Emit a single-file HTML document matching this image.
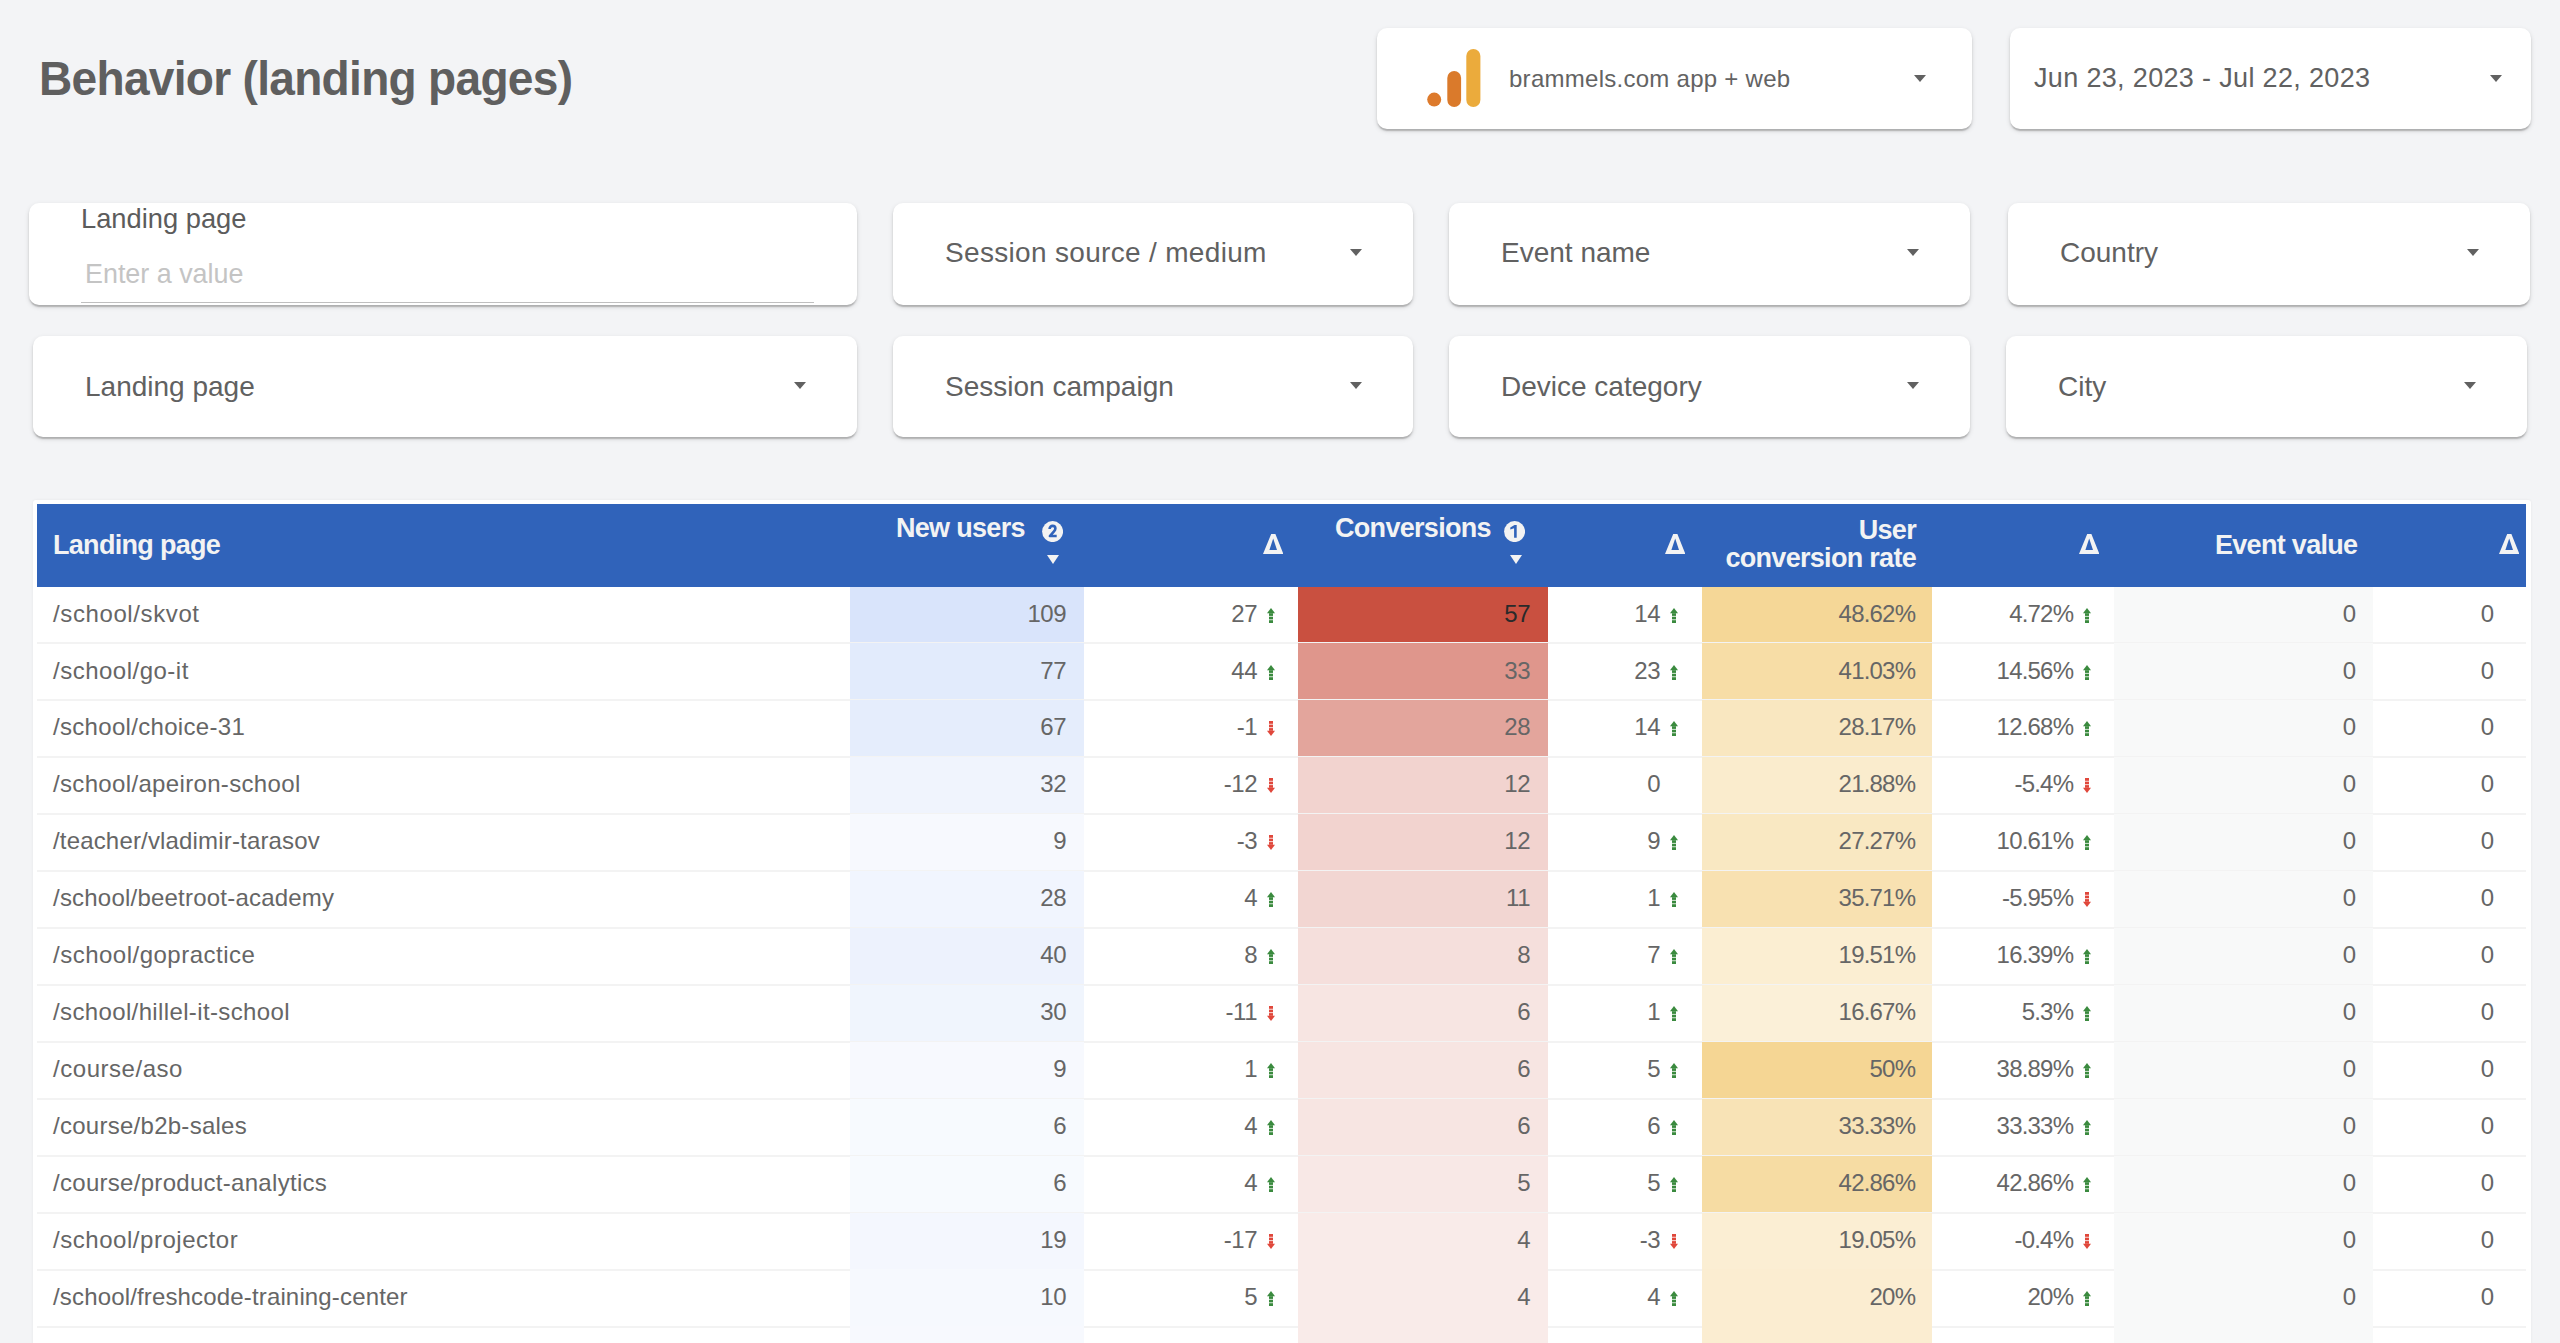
<!DOCTYPE html>
<html><head><meta charset="utf-8"><title>Behavior (landing pages)</title>
<style>
html,body{margin:0;padding:0;}
body{width:2560px;height:1343px;overflow:hidden;background:#f3f4f6;position:relative;font-family:"Liberation Sans",sans-serif;color:#616161;}
.a{position:absolute;white-space:nowrap;}
.card{position:absolute;background:#fff;border-radius:10px;box-shadow:0 2px 5px rgba(0,0,0,0.13),0 2px 2px rgba(0,0,0,0.12),0 3px 1px -1px rgba(0,0,0,0.1);}
.ft{position:absolute;font-size:28px;line-height:32px;color:#616161;white-space:nowrap;}
.hd{position:absolute;color:#f3f3f3;font-weight:bold;font-size:27px;line-height:28px;letter-spacing:-0.7px;white-space:nowrap;}
.cell{position:absolute;font-size:24px;line-height:30px;white-space:nowrap;text-align:right;color:#666666;}
.ar{position:absolute;}
.badge{position:absolute;width:21px;height:21px;border-radius:50%;background:#f3f3f3;color:#3063ba;font-weight:bold;font-size:15px;line-height:21px;text-align:center;}
</style></head><body>

<div class="a" style="left:39px;top:51px;font-size:48.5px;line-height:54px;font-weight:bold;color:#5f5f5f;letter-spacing:-0.75px;transform:scaleX(0.95);transform-origin:0 0;">Behavior (landing pages)</div>
<div class="card" style="left:1377px;top:28px;width:595px;height:101px;"></div>
<svg style="position:absolute;left:1420px;top:45px" width="70" height="70" viewBox="0 0 70 70"><circle cx="14.2" cy="54.6" r="7" fill="#dd7a2c"/><rect x="27.3" y="26" width="13.8" height="36" rx="6.9" fill="#da7a2b"/><rect x="46.3" y="4" width="14.1" height="58" rx="7" fill="#ebab3c"/></svg>
<div class="a" style="left:1509px;top:64px;font-size:24px;line-height:30px;color:#636363;letter-spacing:0.27px">brammels.com app + web</div>
<div style="position:absolute;left:1914px;top:75px;width:0;height:0;border-left:6.5px solid transparent;border-right:6.5px solid transparent;border-top:7px solid #616161"></div>
<div class="card" style="left:2010px;top:28px;width:521px;height:101px;"></div>
<div class="a" style="left:2034px;top:62px;font-size:27px;line-height:32px;color:#616161;letter-spacing:0.34px">Jun 23, 2023 - Jul 22, 2023</div>
<div style="position:absolute;left:2490px;top:75px;width:0;height:0;border-left:6.5px solid transparent;border-right:6.5px solid transparent;border-top:7px solid #616161"></div>
<div class="card" style="left:29px;top:203px;width:828px;height:102px;"></div>
<div class="ft" style="left:81px;top:203px;color:#5c5c5c;font-size:27.3px">Landing page</div>
<div class="ft" style="left:85px;top:258px;color:#c4c4c4;font-size:26.9px">Enter a value</div>
<div class="a" style="left:81px;top:301.5px;width:733px;height:1.2px;background:#bfbfbf"></div>
<div class="card" style="left:893px;top:203px;width:520px;height:102px;"></div>
<div class="ft" style="left:945px;top:237px"><span style='letter-spacing:0.32px'>Session source / medium</span></div>
<div style="position:absolute;left:1350px;top:249px;width:0;height:0;border-left:6.5px solid transparent;border-right:6.5px solid transparent;border-top:7px solid #616161"></div>
<div class="card" style="left:1449px;top:203px;width:521px;height:102px;"></div>
<div class="ft" style="left:1501px;top:237px">Event name</div>
<div style="position:absolute;left:1907px;top:249px;width:0;height:0;border-left:6.5px solid transparent;border-right:6.5px solid transparent;border-top:7px solid #616161"></div>
<div class="card" style="left:2008px;top:203px;width:522px;height:102px;"></div>
<div class="ft" style="left:2060px;top:237px">Country</div>
<div style="position:absolute;left:2467px;top:249px;width:0;height:0;border-left:6.5px solid transparent;border-right:6.5px solid transparent;border-top:7px solid #616161"></div>
<div class="card" style="left:33px;top:336px;width:824px;height:101px;"></div>
<div class="ft" style="left:85px;top:371px">Landing page</div>
<div style="position:absolute;left:794px;top:382px;width:0;height:0;border-left:6.5px solid transparent;border-right:6.5px solid transparent;border-top:7px solid #616161"></div>
<div class="card" style="left:893px;top:336px;width:520px;height:101px;"></div>
<div class="ft" style="left:945px;top:371px">Session campaign</div>
<div style="position:absolute;left:1350px;top:382px;width:0;height:0;border-left:6.5px solid transparent;border-right:6.5px solid transparent;border-top:7px solid #616161"></div>
<div class="card" style="left:1449px;top:336px;width:521px;height:101px;"></div>
<div class="ft" style="left:1501px;top:371px">Device category</div>
<div style="position:absolute;left:1907px;top:382px;width:0;height:0;border-left:6.5px solid transparent;border-right:6.5px solid transparent;border-top:7px solid #616161"></div>
<div class="card" style="left:2006px;top:336px;width:521px;height:101px;"></div>
<div class="ft" style="left:2058px;top:371px">City</div>
<div style="position:absolute;left:2464px;top:382px;width:0;height:0;border-left:6.5px solid transparent;border-right:6.5px solid transparent;border-top:7px solid #616161"></div>
<div class="a" style="left:32.5px;top:500px;width:2498px;height:853px;background:#fff;border-radius:3px;box-shadow:0 0 3px rgba(0,0,0,0.06)"></div>
<div class="a" style="left:37px;top:504px;width:2489px;height:82.5px;background:#3063ba"></div>
<div class="hd" style="left:53px;top:531px">Landing page</div>
<div class="hd" style="left:896px;top:514px">New users</div>
<svg style="position:absolute;left:1041.9px;top:520.9px" width="21.2" height="21.2" viewBox="0 0 21.2 21.2"><circle cx="10.6" cy="10.6" r="10.5" fill="#f3f3f3"/><path d="M7.6 8.0 C7.6 5.8 9.0 4.9 10.6 4.9 C12.4 4.9 13.4 6.0 13.4 7.5 C13.4 8.7 12.8 9.5 11.8 10.6 L7.9 15.0 L14.7 15.0" fill="none" stroke="#3063ba" stroke-width="2.6" stroke-linejoin="round"/></svg>
<div style="position:absolute;left:1046.5px;top:555px;width:0;height:0;border-left:6.25px solid transparent;border-right:6.25px solid transparent;border-top:9.5px solid #f3f3f3"></div>
<div class="hd" style="left:1335px;top:514px">Conversions</div>
<svg style="position:absolute;left:1504.2px;top:521.1px" width="21.2" height="21.2" viewBox="0 0 21.2 21.2"><circle cx="10.6" cy="10.6" r="10.5" fill="#f3f3f3"/><path d="M12.7 3.9 L12.7 16.7 L10.1 16.7 L10.1 7.2 L6.3 8.5 L6.3 6.4 L10.5 3.9 Z" fill="#3063ba"/></svg>
<div style="position:absolute;left:1510px;top:555px;width:0;height:0;border-left:6.25px solid transparent;border-right:6.25px solid transparent;border-top:9.5px solid #f3f3f3"></div>
<div class="hd" style="right:644px;top:516px;text-align:right">User<br>conversion rate</div>
<div class="hd" style="left:2215px;top:531px">Event value</div>
<svg style="position:absolute;left:1263px;top:534px" width="20.4" height="20" viewBox="0 0 20.4 20"><path fill-rule="evenodd" d="M8.2 0 L12.4 0 L20.4 20 L0 20 Z M10.2 4.6 L14.0 16.1 L6.4 16.1 Z" fill="#f3f3f3"/></svg>
<svg style="position:absolute;left:1664.5px;top:534px" width="20.4" height="20" viewBox="0 0 20.4 20"><path fill-rule="evenodd" d="M8.2 0 L12.4 0 L20.4 20 L0 20 Z M10.2 4.6 L14.0 16.1 L6.4 16.1 Z" fill="#f3f3f3"/></svg>
<svg style="position:absolute;left:2079px;top:534px" width="20.4" height="20" viewBox="0 0 20.4 20"><path fill-rule="evenodd" d="M8.2 0 L12.4 0 L20.4 20 L0 20 Z M10.2 4.6 L14.0 16.1 L6.4 16.1 Z" fill="#f3f3f3"/></svg>
<svg style="position:absolute;left:2498.5px;top:534px" width="20.4" height="20" viewBox="0 0 20.4 20"><path fill-rule="evenodd" d="M8.2 0 L12.4 0 L20.4 20 L0 20 Z M10.2 4.6 L14.0 16.1 L6.4 16.1 Z" fill="#f3f3f3"/></svg>
<div class="a" style="left:850px;top:586.5px;width:233.5px;height:56.93px;background:#d9e4fb"></div>
<div class="a" style="left:1298px;top:586.5px;width:249.5px;height:56.93px;background:#c95040"></div>
<div class="a" style="left:1701.5px;top:586.5px;width:230.5px;height:56.93px;background:#f5d797"></div>
<div class="a" style="left:2114px;top:586.5px;width:258.5px;height:56.93px;background:#f8f9f9"></div>
<div class="a" style="left:37px;top:642.43px;width:2489px;height:2px;background:#f3f3f3"></div>
<div class="cell" style="left:53px;top:598.5999999999999px;text-align:left;letter-spacing:0.608px">/school/skvot</div>
<div class="cell" style="right:1494.0px;top:598.5999999999999px;letter-spacing:-0.5px">109</div>
<div class="cell" style="right:1303.0px;top:598.5999999999999px;letter-spacing:-0.5px">27</div>
<div class="cell" style="right:1030.0px;top:598.5999999999999px;letter-spacing:-0.5px;color:#2a2a2a">57</div>
<div class="cell" style="right:900.0px;top:598.5999999999999px;letter-spacing:-0.5px">14</div>
<div class="cell" style="right:644.8px;top:598.5999999999999px;letter-spacing:-0.8px">48.62%</div>
<div class="cell" style="right:486.8px;top:598.5999999999999px;letter-spacing:-0.8px">4.72%</div>
<div class="cell" style="right:204px;top:598.5999999999999px;letter-spacing:0px">0</div>
<div class="cell" style="right:66px;top:598.5999999999999px;letter-spacing:0px">0</div>
<div style="position:absolute;left:1266.7px;top:607.5999999999999px"><svg class="ar" width="8" height="15" viewBox="0 0 8 15"><path d="M4 0 L8 5.2 L0 5.2 Z" fill="#3a8a3e"/><rect x="2" y="5.2" width="4" height="2.7" fill="#3a8a3e"/><rect x="2" y="8.7" width="4" height="2.7" fill="#3a8a3e"/><rect x="2" y="12.2" width="4" height="2.8" fill="#3a8a3e"/></svg></div>
<div style="position:absolute;left:1669.5px;top:607.5999999999999px"><svg class="ar" width="8" height="15" viewBox="0 0 8 15"><path d="M4 0 L8 5.2 L0 5.2 Z" fill="#3a8a3e"/><rect x="2" y="5.2" width="4" height="2.7" fill="#3a8a3e"/><rect x="2" y="8.7" width="4" height="2.7" fill="#3a8a3e"/><rect x="2" y="12.2" width="4" height="2.8" fill="#3a8a3e"/></svg></div>
<div style="position:absolute;left:2083px;top:607.5999999999999px"><svg class="ar" width="8" height="15" viewBox="0 0 8 15"><path d="M4 0 L8 5.2 L0 5.2 Z" fill="#3a8a3e"/><rect x="2" y="5.2" width="4" height="2.7" fill="#3a8a3e"/><rect x="2" y="8.7" width="4" height="2.7" fill="#3a8a3e"/><rect x="2" y="12.2" width="4" height="2.8" fill="#3a8a3e"/></svg></div>
<div class="a" style="left:850px;top:643.2299999999999px;width:233.5px;height:56.93px;background:#e2ebfc"></div>
<div class="a" style="left:1298px;top:643.2299999999999px;width:249.5px;height:56.93px;background:#df968c"></div>
<div class="a" style="left:1701.5px;top:643.2299999999999px;width:230.5px;height:56.93px;background:#f7dda6"></div>
<div class="a" style="left:2114px;top:643.2299999999999px;width:258.5px;height:56.93px;background:#f8f9f9"></div>
<div class="a" style="left:37px;top:699.3599999999999px;width:2489px;height:2px;background:#f3f3f3"></div>
<div class="cell" style="left:53px;top:655.5299999999999px;text-align:left;letter-spacing:0.492px">/school/go-it</div>
<div class="cell" style="right:1494.0px;top:655.5299999999999px;letter-spacing:-0.5px">77</div>
<div class="cell" style="right:1303.0px;top:655.5299999999999px;letter-spacing:-0.5px">44</div>
<div class="cell" style="right:1030.0px;top:655.5299999999999px;letter-spacing:-0.5px">33</div>
<div class="cell" style="right:900.0px;top:655.5299999999999px;letter-spacing:-0.5px">23</div>
<div class="cell" style="right:644.8px;top:655.5299999999999px;letter-spacing:-0.8px">41.03%</div>
<div class="cell" style="right:486.8px;top:655.5299999999999px;letter-spacing:-0.8px">14.56%</div>
<div class="cell" style="right:204px;top:655.5299999999999px;letter-spacing:0px">0</div>
<div class="cell" style="right:66px;top:655.5299999999999px;letter-spacing:0px">0</div>
<div style="position:absolute;left:1266.7px;top:664.5299999999999px"><svg class="ar" width="8" height="15" viewBox="0 0 8 15"><path d="M4 0 L8 5.2 L0 5.2 Z" fill="#3a8a3e"/><rect x="2" y="5.2" width="4" height="2.7" fill="#3a8a3e"/><rect x="2" y="8.7" width="4" height="2.7" fill="#3a8a3e"/><rect x="2" y="12.2" width="4" height="2.8" fill="#3a8a3e"/></svg></div>
<div style="position:absolute;left:1669.5px;top:664.5299999999999px"><svg class="ar" width="8" height="15" viewBox="0 0 8 15"><path d="M4 0 L8 5.2 L0 5.2 Z" fill="#3a8a3e"/><rect x="2" y="5.2" width="4" height="2.7" fill="#3a8a3e"/><rect x="2" y="8.7" width="4" height="2.7" fill="#3a8a3e"/><rect x="2" y="12.2" width="4" height="2.8" fill="#3a8a3e"/></svg></div>
<div style="position:absolute;left:2083px;top:664.5299999999999px"><svg class="ar" width="8" height="15" viewBox="0 0 8 15"><path d="M4 0 L8 5.2 L0 5.2 Z" fill="#3a8a3e"/><rect x="2" y="5.2" width="4" height="2.7" fill="#3a8a3e"/><rect x="2" y="8.7" width="4" height="2.7" fill="#3a8a3e"/><rect x="2" y="12.2" width="4" height="2.8" fill="#3a8a3e"/></svg></div>
<div class="a" style="left:850px;top:700.16px;width:233.5px;height:56.93px;background:#e5edfc"></div>
<div class="a" style="left:1298px;top:700.16px;width:249.5px;height:56.93px;background:#e3a59c"></div>
<div class="a" style="left:1701.5px;top:700.16px;width:230.5px;height:56.93px;background:#f9e7c0"></div>
<div class="a" style="left:2114px;top:700.16px;width:258.5px;height:56.93px;background:#f8f9f9"></div>
<div class="a" style="left:37px;top:756.29px;width:2489px;height:2px;background:#f3f3f3"></div>
<div class="cell" style="left:53px;top:712.4599999999999px;text-align:left;letter-spacing:0.312px">/school/choice-31</div>
<div class="cell" style="right:1494.0px;top:712.4599999999999px;letter-spacing:-0.5px">67</div>
<div class="cell" style="right:1303.0px;top:712.4599999999999px;letter-spacing:-0.5px">-1</div>
<div class="cell" style="right:1030.0px;top:712.4599999999999px;letter-spacing:-0.5px">28</div>
<div class="cell" style="right:900.0px;top:712.4599999999999px;letter-spacing:-0.5px">14</div>
<div class="cell" style="right:644.8px;top:712.4599999999999px;letter-spacing:-0.8px">28.17%</div>
<div class="cell" style="right:486.8px;top:712.4599999999999px;letter-spacing:-0.8px">12.68%</div>
<div class="cell" style="right:204px;top:712.4599999999999px;letter-spacing:0px">0</div>
<div class="cell" style="right:66px;top:712.4599999999999px;letter-spacing:0px">0</div>
<div style="position:absolute;left:1266.7px;top:721.4599999999999px"><svg class="ar" width="8" height="15" viewBox="0 0 8 15"><path d="M4 15 L8 9.8 L0 9.8 Z" fill="#e0473b"/><rect x="2" y="0" width="4" height="2.8" fill="#e0473b"/><rect x="2" y="3.6" width="4" height="2.7" fill="#e0473b"/><rect x="2" y="7.1" width="4" height="2.7" fill="#e0473b"/></svg></div>
<div style="position:absolute;left:1669.5px;top:721.4599999999999px"><svg class="ar" width="8" height="15" viewBox="0 0 8 15"><path d="M4 0 L8 5.2 L0 5.2 Z" fill="#3a8a3e"/><rect x="2" y="5.2" width="4" height="2.7" fill="#3a8a3e"/><rect x="2" y="8.7" width="4" height="2.7" fill="#3a8a3e"/><rect x="2" y="12.2" width="4" height="2.8" fill="#3a8a3e"/></svg></div>
<div style="position:absolute;left:2083px;top:721.4599999999999px"><svg class="ar" width="8" height="15" viewBox="0 0 8 15"><path d="M4 0 L8 5.2 L0 5.2 Z" fill="#3a8a3e"/><rect x="2" y="5.2" width="4" height="2.7" fill="#3a8a3e"/><rect x="2" y="8.7" width="4" height="2.7" fill="#3a8a3e"/><rect x="2" y="12.2" width="4" height="2.8" fill="#3a8a3e"/></svg></div>
<div class="a" style="left:850px;top:757.0899999999999px;width:233.5px;height:56.93px;background:#f0f4fd"></div>
<div class="a" style="left:1298px;top:757.0899999999999px;width:249.5px;height:56.93px;background:#f2d3cf"></div>
<div class="a" style="left:1701.5px;top:757.0899999999999px;width:230.5px;height:56.93px;background:#faeccd"></div>
<div class="a" style="left:2114px;top:757.0899999999999px;width:258.5px;height:56.93px;background:#f8f9f9"></div>
<div class="a" style="left:37px;top:813.2199999999999px;width:2489px;height:2px;background:#f3f3f3"></div>
<div class="cell" style="left:53px;top:769.3899999999999px;text-align:left;letter-spacing:0.338px">/school/apeiron-school</div>
<div class="cell" style="right:1494.0px;top:769.3899999999999px;letter-spacing:-0.5px">32</div>
<div class="cell" style="right:1303.0px;top:769.3899999999999px;letter-spacing:-0.5px">-12</div>
<div class="cell" style="right:1030.0px;top:769.3899999999999px;letter-spacing:-0.5px">12</div>
<div class="cell" style="right:899.5px;top:769.3899999999999px;letter-spacing:0px">0</div>
<div class="cell" style="right:644.8px;top:769.3899999999999px;letter-spacing:-0.8px">21.88%</div>
<div class="cell" style="right:486.8px;top:769.3899999999999px;letter-spacing:-0.8px">-5.4%</div>
<div class="cell" style="right:204px;top:769.3899999999999px;letter-spacing:0px">0</div>
<div class="cell" style="right:66px;top:769.3899999999999px;letter-spacing:0px">0</div>
<div style="position:absolute;left:1266.7px;top:778.3899999999999px"><svg class="ar" width="8" height="15" viewBox="0 0 8 15"><path d="M4 15 L8 9.8 L0 9.8 Z" fill="#e0473b"/><rect x="2" y="0" width="4" height="2.8" fill="#e0473b"/><rect x="2" y="3.6" width="4" height="2.7" fill="#e0473b"/><rect x="2" y="7.1" width="4" height="2.7" fill="#e0473b"/></svg></div>
<div style="position:absolute;left:2083px;top:778.3899999999999px"><svg class="ar" width="8" height="15" viewBox="0 0 8 15"><path d="M4 15 L8 9.8 L0 9.8 Z" fill="#e0473b"/><rect x="2" y="0" width="4" height="2.8" fill="#e0473b"/><rect x="2" y="3.6" width="4" height="2.7" fill="#e0473b"/><rect x="2" y="7.1" width="4" height="2.7" fill="#e0473b"/></svg></div>
<div class="a" style="left:850px;top:814.02px;width:233.5px;height:56.93px;background:#f7f9fe"></div>
<div class="a" style="left:1298px;top:814.02px;width:249.5px;height:56.93px;background:#f2d3cf"></div>
<div class="a" style="left:1701.5px;top:814.02px;width:230.5px;height:56.93px;background:#f9e8c2"></div>
<div class="a" style="left:2114px;top:814.02px;width:258.5px;height:56.93px;background:#f8f9f9"></div>
<div class="a" style="left:37px;top:870.15px;width:2489px;height:2px;background:#f3f3f3"></div>
<div class="cell" style="left:53px;top:826.3199999999999px;text-align:left;letter-spacing:0.167px">/teacher/vladimir-tarasov</div>
<div class="cell" style="right:1493.5px;top:826.3199999999999px;letter-spacing:0px">9</div>
<div class="cell" style="right:1303.0px;top:826.3199999999999px;letter-spacing:-0.5px">-3</div>
<div class="cell" style="right:1030.0px;top:826.3199999999999px;letter-spacing:-0.5px">12</div>
<div class="cell" style="right:899.5px;top:826.3199999999999px;letter-spacing:0px">9</div>
<div class="cell" style="right:644.8px;top:826.3199999999999px;letter-spacing:-0.8px">27.27%</div>
<div class="cell" style="right:486.8px;top:826.3199999999999px;letter-spacing:-0.8px">10.61%</div>
<div class="cell" style="right:204px;top:826.3199999999999px;letter-spacing:0px">0</div>
<div class="cell" style="right:66px;top:826.3199999999999px;letter-spacing:0px">0</div>
<div style="position:absolute;left:1266.7px;top:835.3199999999999px"><svg class="ar" width="8" height="15" viewBox="0 0 8 15"><path d="M4 15 L8 9.8 L0 9.8 Z" fill="#e0473b"/><rect x="2" y="0" width="4" height="2.8" fill="#e0473b"/><rect x="2" y="3.6" width="4" height="2.7" fill="#e0473b"/><rect x="2" y="7.1" width="4" height="2.7" fill="#e0473b"/></svg></div>
<div style="position:absolute;left:1669.5px;top:835.3199999999999px"><svg class="ar" width="8" height="15" viewBox="0 0 8 15"><path d="M4 0 L8 5.2 L0 5.2 Z" fill="#3a8a3e"/><rect x="2" y="5.2" width="4" height="2.7" fill="#3a8a3e"/><rect x="2" y="8.7" width="4" height="2.7" fill="#3a8a3e"/><rect x="2" y="12.2" width="4" height="2.8" fill="#3a8a3e"/></svg></div>
<div style="position:absolute;left:2083px;top:835.3199999999999px"><svg class="ar" width="8" height="15" viewBox="0 0 8 15"><path d="M4 0 L8 5.2 L0 5.2 Z" fill="#3a8a3e"/><rect x="2" y="5.2" width="4" height="2.7" fill="#3a8a3e"/><rect x="2" y="8.7" width="4" height="2.7" fill="#3a8a3e"/><rect x="2" y="12.2" width="4" height="2.8" fill="#3a8a3e"/></svg></div>
<div class="a" style="left:850px;top:870.9499999999999px;width:233.5px;height:56.93px;background:#f1f5fe"></div>
<div class="a" style="left:1298px;top:870.9499999999999px;width:249.5px;height:56.93px;background:#f2d6d2"></div>
<div class="a" style="left:1701.5px;top:870.9499999999999px;width:230.5px;height:56.93px;background:#f8e1b1"></div>
<div class="a" style="left:2114px;top:870.9499999999999px;width:258.5px;height:56.93px;background:#f8f9f9"></div>
<div class="a" style="left:37px;top:927.0799999999999px;width:2489px;height:2px;background:#f3f3f3"></div>
<div class="cell" style="left:53px;top:883.2499999999999px;text-align:left;letter-spacing:0.213px">/school/beetroot-academy</div>
<div class="cell" style="right:1494.0px;top:883.2499999999999px;letter-spacing:-0.5px">28</div>
<div class="cell" style="right:1302.5px;top:883.2499999999999px;letter-spacing:0px">4</div>
<div class="cell" style="right:1030.0px;top:883.2499999999999px;letter-spacing:-0.5px">11</div>
<div class="cell" style="right:899.5px;top:883.2499999999999px;letter-spacing:0px">1</div>
<div class="cell" style="right:644.8px;top:883.2499999999999px;letter-spacing:-0.8px">35.71%</div>
<div class="cell" style="right:486.8px;top:883.2499999999999px;letter-spacing:-0.8px">-5.95%</div>
<div class="cell" style="right:204px;top:883.2499999999999px;letter-spacing:0px">0</div>
<div class="cell" style="right:66px;top:883.2499999999999px;letter-spacing:0px">0</div>
<div style="position:absolute;left:1266.7px;top:892.2499999999999px"><svg class="ar" width="8" height="15" viewBox="0 0 8 15"><path d="M4 0 L8 5.2 L0 5.2 Z" fill="#3a8a3e"/><rect x="2" y="5.2" width="4" height="2.7" fill="#3a8a3e"/><rect x="2" y="8.7" width="4" height="2.7" fill="#3a8a3e"/><rect x="2" y="12.2" width="4" height="2.8" fill="#3a8a3e"/></svg></div>
<div style="position:absolute;left:1669.5px;top:892.2499999999999px"><svg class="ar" width="8" height="15" viewBox="0 0 8 15"><path d="M4 0 L8 5.2 L0 5.2 Z" fill="#3a8a3e"/><rect x="2" y="5.2" width="4" height="2.7" fill="#3a8a3e"/><rect x="2" y="8.7" width="4" height="2.7" fill="#3a8a3e"/><rect x="2" y="12.2" width="4" height="2.8" fill="#3a8a3e"/></svg></div>
<div style="position:absolute;left:2083px;top:892.2499999999999px"><svg class="ar" width="8" height="15" viewBox="0 0 8 15"><path d="M4 15 L8 9.8 L0 9.8 Z" fill="#e0473b"/><rect x="2" y="0" width="4" height="2.8" fill="#e0473b"/><rect x="2" y="3.6" width="4" height="2.7" fill="#e0473b"/><rect x="2" y="7.1" width="4" height="2.7" fill="#e0473b"/></svg></div>
<div class="a" style="left:850px;top:927.8799999999999px;width:233.5px;height:56.93px;background:#edf2fd"></div>
<div class="a" style="left:1298px;top:927.8799999999999px;width:249.5px;height:56.93px;background:#f5dfdc"></div>
<div class="a" style="left:1701.5px;top:927.8799999999999px;width:230.5px;height:56.93px;background:#fbeed2"></div>
<div class="a" style="left:2114px;top:927.8799999999999px;width:258.5px;height:56.93px;background:#f8f9f9"></div>
<div class="a" style="left:37px;top:984.0099999999999px;width:2489px;height:2px;background:#f3f3f3"></div>
<div class="cell" style="left:53px;top:940.1799999999998px;text-align:left;letter-spacing:0.494px">/school/gopractice</div>
<div class="cell" style="right:1494.0px;top:940.1799999999998px;letter-spacing:-0.5px">40</div>
<div class="cell" style="right:1302.5px;top:940.1799999999998px;letter-spacing:0px">8</div>
<div class="cell" style="right:1029.5px;top:940.1799999999998px;letter-spacing:0px">8</div>
<div class="cell" style="right:899.5px;top:940.1799999999998px;letter-spacing:0px">7</div>
<div class="cell" style="right:644.8px;top:940.1799999999998px;letter-spacing:-0.8px">19.51%</div>
<div class="cell" style="right:486.8px;top:940.1799999999998px;letter-spacing:-0.8px">16.39%</div>
<div class="cell" style="right:204px;top:940.1799999999998px;letter-spacing:0px">0</div>
<div class="cell" style="right:66px;top:940.1799999999998px;letter-spacing:0px">0</div>
<div style="position:absolute;left:1266.7px;top:949.1799999999998px"><svg class="ar" width="8" height="15" viewBox="0 0 8 15"><path d="M4 0 L8 5.2 L0 5.2 Z" fill="#3a8a3e"/><rect x="2" y="5.2" width="4" height="2.7" fill="#3a8a3e"/><rect x="2" y="8.7" width="4" height="2.7" fill="#3a8a3e"/><rect x="2" y="12.2" width="4" height="2.8" fill="#3a8a3e"/></svg></div>
<div style="position:absolute;left:1669.5px;top:949.1799999999998px"><svg class="ar" width="8" height="15" viewBox="0 0 8 15"><path d="M4 0 L8 5.2 L0 5.2 Z" fill="#3a8a3e"/><rect x="2" y="5.2" width="4" height="2.7" fill="#3a8a3e"/><rect x="2" y="8.7" width="4" height="2.7" fill="#3a8a3e"/><rect x="2" y="12.2" width="4" height="2.8" fill="#3a8a3e"/></svg></div>
<div style="position:absolute;left:2083px;top:949.1799999999998px"><svg class="ar" width="8" height="15" viewBox="0 0 8 15"><path d="M4 0 L8 5.2 L0 5.2 Z" fill="#3a8a3e"/><rect x="2" y="5.2" width="4" height="2.7" fill="#3a8a3e"/><rect x="2" y="8.7" width="4" height="2.7" fill="#3a8a3e"/><rect x="2" y="12.2" width="4" height="2.8" fill="#3a8a3e"/></svg></div>
<div class="a" style="left:850px;top:984.81px;width:233.5px;height:56.93px;background:#f0f5fd"></div>
<div class="a" style="left:1298px;top:984.81px;width:249.5px;height:56.93px;background:#f7e5e2"></div>
<div class="a" style="left:1701.5px;top:984.81px;width:230.5px;height:56.93px;background:#fbf0d8"></div>
<div class="a" style="left:2114px;top:984.81px;width:258.5px;height:56.93px;background:#f8f9f9"></div>
<div class="a" style="left:37px;top:1040.94px;width:2489px;height:2px;background:#f3f3f3"></div>
<div class="cell" style="left:53px;top:997.1099999999999px;text-align:left;letter-spacing:0.365px">/school/hillel-it-school</div>
<div class="cell" style="right:1494.0px;top:997.1099999999999px;letter-spacing:-0.5px">30</div>
<div class="cell" style="right:1303.0px;top:997.1099999999999px;letter-spacing:-0.5px">-11</div>
<div class="cell" style="right:1029.5px;top:997.1099999999999px;letter-spacing:0px">6</div>
<div class="cell" style="right:899.5px;top:997.1099999999999px;letter-spacing:0px">1</div>
<div class="cell" style="right:644.8px;top:997.1099999999999px;letter-spacing:-0.8px">16.67%</div>
<div class="cell" style="right:486.8px;top:997.1099999999999px;letter-spacing:-0.8px">5.3%</div>
<div class="cell" style="right:204px;top:997.1099999999999px;letter-spacing:0px">0</div>
<div class="cell" style="right:66px;top:997.1099999999999px;letter-spacing:0px">0</div>
<div style="position:absolute;left:1266.7px;top:1006.1099999999999px"><svg class="ar" width="8" height="15" viewBox="0 0 8 15"><path d="M4 15 L8 9.8 L0 9.8 Z" fill="#e0473b"/><rect x="2" y="0" width="4" height="2.8" fill="#e0473b"/><rect x="2" y="3.6" width="4" height="2.7" fill="#e0473b"/><rect x="2" y="7.1" width="4" height="2.7" fill="#e0473b"/></svg></div>
<div style="position:absolute;left:1669.5px;top:1006.1099999999999px"><svg class="ar" width="8" height="15" viewBox="0 0 8 15"><path d="M4 0 L8 5.2 L0 5.2 Z" fill="#3a8a3e"/><rect x="2" y="5.2" width="4" height="2.7" fill="#3a8a3e"/><rect x="2" y="8.7" width="4" height="2.7" fill="#3a8a3e"/><rect x="2" y="12.2" width="4" height="2.8" fill="#3a8a3e"/></svg></div>
<div style="position:absolute;left:2083px;top:1006.1099999999999px"><svg class="ar" width="8" height="15" viewBox="0 0 8 15"><path d="M4 0 L8 5.2 L0 5.2 Z" fill="#3a8a3e"/><rect x="2" y="5.2" width="4" height="2.7" fill="#3a8a3e"/><rect x="2" y="8.7" width="4" height="2.7" fill="#3a8a3e"/><rect x="2" y="12.2" width="4" height="2.8" fill="#3a8a3e"/></svg></div>
<div class="a" style="left:850px;top:1041.74px;width:233.5px;height:56.93px;background:#f7f9fe"></div>
<div class="a" style="left:1298px;top:1041.74px;width:249.5px;height:56.93px;background:#f7e5e2"></div>
<div class="a" style="left:1701.5px;top:1041.74px;width:230.5px;height:56.93px;background:#f5d694"></div>
<div class="a" style="left:2114px;top:1041.74px;width:258.5px;height:56.93px;background:#f8f9f9"></div>
<div class="a" style="left:37px;top:1097.8700000000001px;width:2489px;height:2px;background:#f3f3f3"></div>
<div class="cell" style="left:53px;top:1054.04px;text-align:left;letter-spacing:0.540px">/course/aso</div>
<div class="cell" style="right:1493.5px;top:1054.04px;letter-spacing:0px">9</div>
<div class="cell" style="right:1302.5px;top:1054.04px;letter-spacing:0px">1</div>
<div class="cell" style="right:1029.5px;top:1054.04px;letter-spacing:0px">6</div>
<div class="cell" style="right:899.5px;top:1054.04px;letter-spacing:0px">5</div>
<div class="cell" style="right:644.8px;top:1054.04px;letter-spacing:-0.8px">50%</div>
<div class="cell" style="right:486.8px;top:1054.04px;letter-spacing:-0.8px">38.89%</div>
<div class="cell" style="right:204px;top:1054.04px;letter-spacing:0px">0</div>
<div class="cell" style="right:66px;top:1054.04px;letter-spacing:0px">0</div>
<div style="position:absolute;left:1266.7px;top:1063.04px"><svg class="ar" width="8" height="15" viewBox="0 0 8 15"><path d="M4 0 L8 5.2 L0 5.2 Z" fill="#3a8a3e"/><rect x="2" y="5.2" width="4" height="2.7" fill="#3a8a3e"/><rect x="2" y="8.7" width="4" height="2.7" fill="#3a8a3e"/><rect x="2" y="12.2" width="4" height="2.8" fill="#3a8a3e"/></svg></div>
<div style="position:absolute;left:1669.5px;top:1063.04px"><svg class="ar" width="8" height="15" viewBox="0 0 8 15"><path d="M4 0 L8 5.2 L0 5.2 Z" fill="#3a8a3e"/><rect x="2" y="5.2" width="4" height="2.7" fill="#3a8a3e"/><rect x="2" y="8.7" width="4" height="2.7" fill="#3a8a3e"/><rect x="2" y="12.2" width="4" height="2.8" fill="#3a8a3e"/></svg></div>
<div style="position:absolute;left:2083px;top:1063.04px"><svg class="ar" width="8" height="15" viewBox="0 0 8 15"><path d="M4 0 L8 5.2 L0 5.2 Z" fill="#3a8a3e"/><rect x="2" y="5.2" width="4" height="2.7" fill="#3a8a3e"/><rect x="2" y="8.7" width="4" height="2.7" fill="#3a8a3e"/><rect x="2" y="12.2" width="4" height="2.8" fill="#3a8a3e"/></svg></div>
<div class="a" style="left:850px;top:1098.67px;width:233.5px;height:56.93px;background:#f7fafe"></div>
<div class="a" style="left:1298px;top:1098.67px;width:249.5px;height:56.93px;background:#f7e5e2"></div>
<div class="a" style="left:1701.5px;top:1098.67px;width:230.5px;height:56.93px;background:#f8e3b6"></div>
<div class="a" style="left:2114px;top:1098.67px;width:258.5px;height:56.93px;background:#f8f9f9"></div>
<div class="a" style="left:37px;top:1154.8000000000002px;width:2489px;height:2px;background:#f3f3f3"></div>
<div class="cell" style="left:53px;top:1110.97px;text-align:left;letter-spacing:0.269px">/course/b2b-sales</div>
<div class="cell" style="right:1493.5px;top:1110.97px;letter-spacing:0px">6</div>
<div class="cell" style="right:1302.5px;top:1110.97px;letter-spacing:0px">4</div>
<div class="cell" style="right:1029.5px;top:1110.97px;letter-spacing:0px">6</div>
<div class="cell" style="right:899.5px;top:1110.97px;letter-spacing:0px">6</div>
<div class="cell" style="right:644.8px;top:1110.97px;letter-spacing:-0.8px">33.33%</div>
<div class="cell" style="right:486.8px;top:1110.97px;letter-spacing:-0.8px">33.33%</div>
<div class="cell" style="right:204px;top:1110.97px;letter-spacing:0px">0</div>
<div class="cell" style="right:66px;top:1110.97px;letter-spacing:0px">0</div>
<div style="position:absolute;left:1266.7px;top:1119.97px"><svg class="ar" width="8" height="15" viewBox="0 0 8 15"><path d="M4 0 L8 5.2 L0 5.2 Z" fill="#3a8a3e"/><rect x="2" y="5.2" width="4" height="2.7" fill="#3a8a3e"/><rect x="2" y="8.7" width="4" height="2.7" fill="#3a8a3e"/><rect x="2" y="12.2" width="4" height="2.8" fill="#3a8a3e"/></svg></div>
<div style="position:absolute;left:1669.5px;top:1119.97px"><svg class="ar" width="8" height="15" viewBox="0 0 8 15"><path d="M4 0 L8 5.2 L0 5.2 Z" fill="#3a8a3e"/><rect x="2" y="5.2" width="4" height="2.7" fill="#3a8a3e"/><rect x="2" y="8.7" width="4" height="2.7" fill="#3a8a3e"/><rect x="2" y="12.2" width="4" height="2.8" fill="#3a8a3e"/></svg></div>
<div style="position:absolute;left:2083px;top:1119.97px"><svg class="ar" width="8" height="15" viewBox="0 0 8 15"><path d="M4 0 L8 5.2 L0 5.2 Z" fill="#3a8a3e"/><rect x="2" y="5.2" width="4" height="2.7" fill="#3a8a3e"/><rect x="2" y="8.7" width="4" height="2.7" fill="#3a8a3e"/><rect x="2" y="12.2" width="4" height="2.8" fill="#3a8a3e"/></svg></div>
<div class="a" style="left:850px;top:1155.6px;width:233.5px;height:56.93px;background:#f7fafe"></div>
<div class="a" style="left:1298px;top:1155.6px;width:249.5px;height:56.93px;background:#f8e8e6"></div>
<div class="a" style="left:1701.5px;top:1155.6px;width:230.5px;height:56.93px;background:#f6dca3"></div>
<div class="a" style="left:2114px;top:1155.6px;width:258.5px;height:56.93px;background:#f8f9f9"></div>
<div class="a" style="left:37px;top:1211.73px;width:2489px;height:2px;background:#f3f3f3"></div>
<div class="cell" style="left:53px;top:1167.8999999999999px;text-align:left;letter-spacing:0.292px">/course/product-analytics</div>
<div class="cell" style="right:1493.5px;top:1167.8999999999999px;letter-spacing:0px">6</div>
<div class="cell" style="right:1302.5px;top:1167.8999999999999px;letter-spacing:0px">4</div>
<div class="cell" style="right:1029.5px;top:1167.8999999999999px;letter-spacing:0px">5</div>
<div class="cell" style="right:899.5px;top:1167.8999999999999px;letter-spacing:0px">5</div>
<div class="cell" style="right:644.8px;top:1167.8999999999999px;letter-spacing:-0.8px">42.86%</div>
<div class="cell" style="right:486.8px;top:1167.8999999999999px;letter-spacing:-0.8px">42.86%</div>
<div class="cell" style="right:204px;top:1167.8999999999999px;letter-spacing:0px">0</div>
<div class="cell" style="right:66px;top:1167.8999999999999px;letter-spacing:0px">0</div>
<div style="position:absolute;left:1266.7px;top:1176.8999999999999px"><svg class="ar" width="8" height="15" viewBox="0 0 8 15"><path d="M4 0 L8 5.2 L0 5.2 Z" fill="#3a8a3e"/><rect x="2" y="5.2" width="4" height="2.7" fill="#3a8a3e"/><rect x="2" y="8.7" width="4" height="2.7" fill="#3a8a3e"/><rect x="2" y="12.2" width="4" height="2.8" fill="#3a8a3e"/></svg></div>
<div style="position:absolute;left:1669.5px;top:1176.8999999999999px"><svg class="ar" width="8" height="15" viewBox="0 0 8 15"><path d="M4 0 L8 5.2 L0 5.2 Z" fill="#3a8a3e"/><rect x="2" y="5.2" width="4" height="2.7" fill="#3a8a3e"/><rect x="2" y="8.7" width="4" height="2.7" fill="#3a8a3e"/><rect x="2" y="12.2" width="4" height="2.8" fill="#3a8a3e"/></svg></div>
<div style="position:absolute;left:2083px;top:1176.8999999999999px"><svg class="ar" width="8" height="15" viewBox="0 0 8 15"><path d="M4 0 L8 5.2 L0 5.2 Z" fill="#3a8a3e"/><rect x="2" y="5.2" width="4" height="2.7" fill="#3a8a3e"/><rect x="2" y="8.7" width="4" height="2.7" fill="#3a8a3e"/><rect x="2" y="12.2" width="4" height="2.8" fill="#3a8a3e"/></svg></div>
<div class="a" style="left:850px;top:1212.53px;width:233.5px;height:56.93px;background:#f4f7fe"></div>
<div class="a" style="left:1298px;top:1212.53px;width:249.5px;height:56.93px;background:#f9ebe9"></div>
<div class="a" style="left:1701.5px;top:1212.53px;width:230.5px;height:56.93px;background:#fbeed3"></div>
<div class="a" style="left:2114px;top:1212.53px;width:258.5px;height:56.93px;background:#f8f9f9"></div>
<div class="a" style="left:37px;top:1268.66px;width:2489px;height:2px;background:#f3f3f3"></div>
<div class="cell" style="left:53px;top:1224.83px;text-align:left;letter-spacing:0.537px">/school/projector</div>
<div class="cell" style="right:1494.0px;top:1224.83px;letter-spacing:-0.5px">19</div>
<div class="cell" style="right:1303.0px;top:1224.83px;letter-spacing:-0.5px">-17</div>
<div class="cell" style="right:1029.5px;top:1224.83px;letter-spacing:0px">4</div>
<div class="cell" style="right:900.0px;top:1224.83px;letter-spacing:-0.5px">-3</div>
<div class="cell" style="right:644.8px;top:1224.83px;letter-spacing:-0.8px">19.05%</div>
<div class="cell" style="right:486.8px;top:1224.83px;letter-spacing:-0.8px">-0.4%</div>
<div class="cell" style="right:204px;top:1224.83px;letter-spacing:0px">0</div>
<div class="cell" style="right:66px;top:1224.83px;letter-spacing:0px">0</div>
<div style="position:absolute;left:1266.7px;top:1233.83px"><svg class="ar" width="8" height="15" viewBox="0 0 8 15"><path d="M4 15 L8 9.8 L0 9.8 Z" fill="#e0473b"/><rect x="2" y="0" width="4" height="2.8" fill="#e0473b"/><rect x="2" y="3.6" width="4" height="2.7" fill="#e0473b"/><rect x="2" y="7.1" width="4" height="2.7" fill="#e0473b"/></svg></div>
<div style="position:absolute;left:1669.5px;top:1233.83px"><svg class="ar" width="8" height="15" viewBox="0 0 8 15"><path d="M4 15 L8 9.8 L0 9.8 Z" fill="#e0473b"/><rect x="2" y="0" width="4" height="2.8" fill="#e0473b"/><rect x="2" y="3.6" width="4" height="2.7" fill="#e0473b"/><rect x="2" y="7.1" width="4" height="2.7" fill="#e0473b"/></svg></div>
<div style="position:absolute;left:2083px;top:1233.83px"><svg class="ar" width="8" height="15" viewBox="0 0 8 15"><path d="M4 15 L8 9.8 L0 9.8 Z" fill="#e0473b"/><rect x="2" y="0" width="4" height="2.8" fill="#e0473b"/><rect x="2" y="3.6" width="4" height="2.7" fill="#e0473b"/><rect x="2" y="7.1" width="4" height="2.7" fill="#e0473b"/></svg></div>
<div class="a" style="left:850px;top:1269.46px;width:233.5px;height:56.93px;background:#f6f9fe"></div>
<div class="a" style="left:1298px;top:1269.46px;width:249.5px;height:56.93px;background:#f9ebe9"></div>
<div class="a" style="left:1701.5px;top:1269.46px;width:230.5px;height:56.93px;background:#fbedd1"></div>
<div class="a" style="left:2114px;top:1269.46px;width:258.5px;height:56.93px;background:#f8f9f9"></div>
<div class="a" style="left:37px;top:1325.5900000000001px;width:2489px;height:2px;background:#f3f3f3"></div>
<div class="cell" style="left:53px;top:1281.76px;text-align:left;letter-spacing:0.156px">/school/freshcode-training-center</div>
<div class="cell" style="right:1494.0px;top:1281.76px;letter-spacing:-0.5px">10</div>
<div class="cell" style="right:1302.5px;top:1281.76px;letter-spacing:0px">5</div>
<div class="cell" style="right:1029.5px;top:1281.76px;letter-spacing:0px">4</div>
<div class="cell" style="right:899.5px;top:1281.76px;letter-spacing:0px">4</div>
<div class="cell" style="right:644.8px;top:1281.76px;letter-spacing:-0.8px">20%</div>
<div class="cell" style="right:486.8px;top:1281.76px;letter-spacing:-0.8px">20%</div>
<div class="cell" style="right:204px;top:1281.76px;letter-spacing:0px">0</div>
<div class="cell" style="right:66px;top:1281.76px;letter-spacing:0px">0</div>
<div style="position:absolute;left:1266.7px;top:1290.76px"><svg class="ar" width="8" height="15" viewBox="0 0 8 15"><path d="M4 0 L8 5.2 L0 5.2 Z" fill="#3a8a3e"/><rect x="2" y="5.2" width="4" height="2.7" fill="#3a8a3e"/><rect x="2" y="8.7" width="4" height="2.7" fill="#3a8a3e"/><rect x="2" y="12.2" width="4" height="2.8" fill="#3a8a3e"/></svg></div>
<div style="position:absolute;left:1669.5px;top:1290.76px"><svg class="ar" width="8" height="15" viewBox="0 0 8 15"><path d="M4 0 L8 5.2 L0 5.2 Z" fill="#3a8a3e"/><rect x="2" y="5.2" width="4" height="2.7" fill="#3a8a3e"/><rect x="2" y="8.7" width="4" height="2.7" fill="#3a8a3e"/><rect x="2" y="12.2" width="4" height="2.8" fill="#3a8a3e"/></svg></div>
<div style="position:absolute;left:2083px;top:1290.76px"><svg class="ar" width="8" height="15" viewBox="0 0 8 15"><path d="M4 0 L8 5.2 L0 5.2 Z" fill="#3a8a3e"/><rect x="2" y="5.2" width="4" height="2.7" fill="#3a8a3e"/><rect x="2" y="8.7" width="4" height="2.7" fill="#3a8a3e"/><rect x="2" y="12.2" width="4" height="2.8" fill="#3a8a3e"/></svg></div>
<div class="a" style="left:850px;top:1326.3899999999999px;width:233.5px;height:56.93px;background:#f7f9fe"></div>
<div class="a" style="left:1298px;top:1326.3899999999999px;width:249.5px;height:56.93px;background:#f9ebe9"></div>
<div class="a" style="left:1701.5px;top:1326.3899999999999px;width:230.5px;height:56.93px;background:#fbedd1"></div>
<div class="a" style="left:2114px;top:1326.3899999999999px;width:258.5px;height:56.93px;background:#f8f9f9"></div>
<div class="a" style="left:37px;top:1382.52px;width:2489px;height:2px;background:#f3f3f3"></div>
</body></html>
